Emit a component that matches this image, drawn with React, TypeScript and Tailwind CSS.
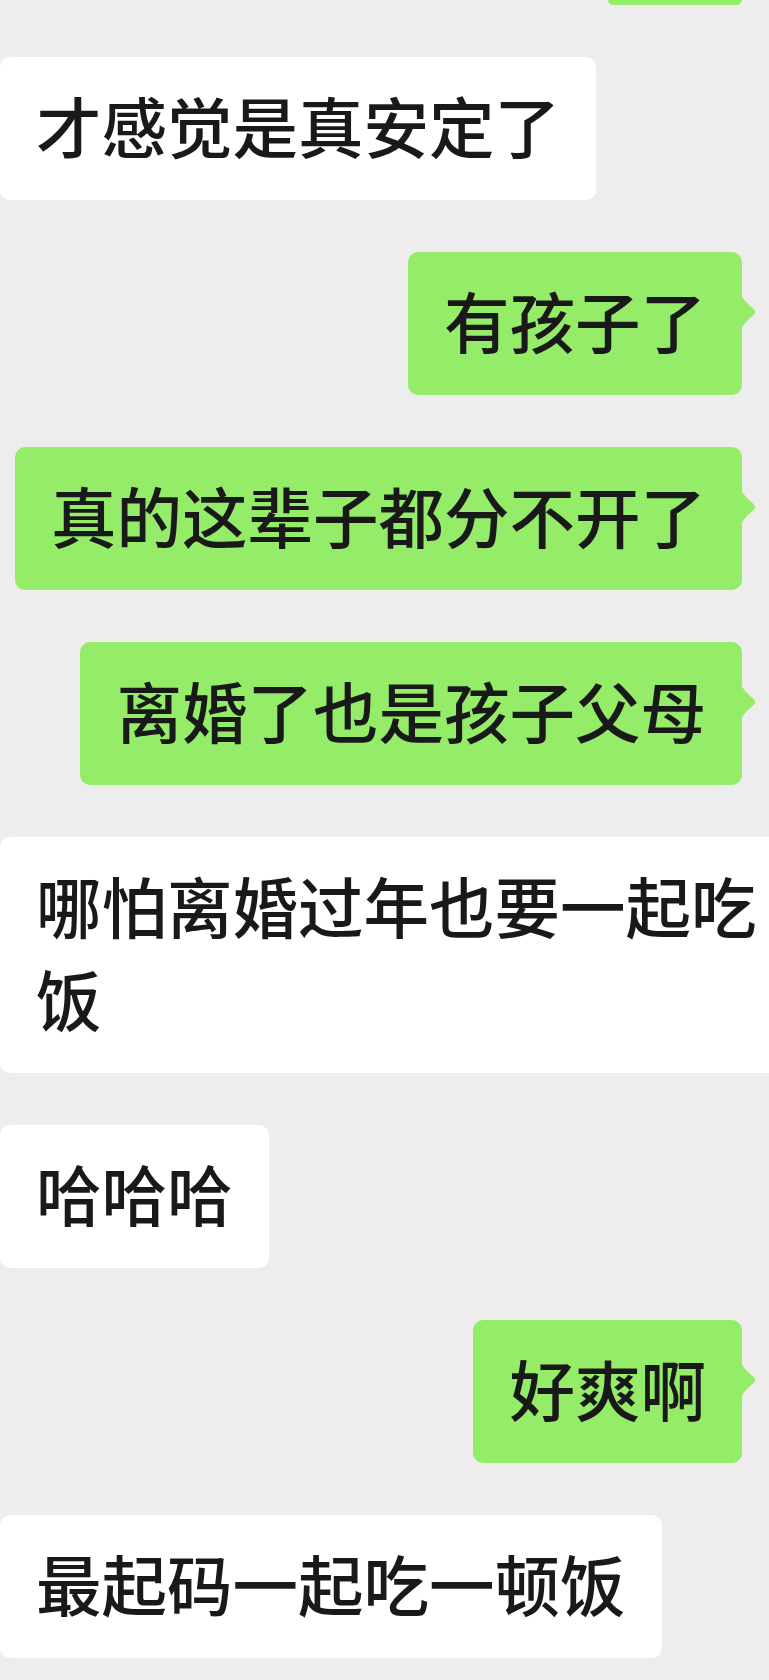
import React from "react";

function Tail() {
  return (
    <svg
      className="absolute left-[calc(100%-1px)] top-[42px] w-[16px] h-[36px]"
      viewBox="0 0 16 36"
      aria-hidden="true"
    >
      <path
        d="M0 0 C1.5 4 3.5 6.5 7 10 L13 15.5 Q15.5 18 13 20.5 L7 26 C3.5 29.5 1.5 32 0 36 Z"
        fill="#95ec69"
      />
    </svg>
  );
}

function Green({ children }: { children: React.ReactNode }) {
  return (
    <div className="self-end mr-[27px] relative bg-[#95ec69] rounded-[10px] px-[36px] pt-[21px] pb-[29px] whitespace-nowrap">
      {children}
      <Tail />
    </div>
  );
}

function White({ children, wide }: { children: React.ReactNode; wide?: boolean }) {
  return (
    <div
      className={
        wide
          ? "self-start shrink-0 w-[820px] bg-white rounded-[10px] px-[36px] pt-[21px] pb-[29px] whitespace-nowrap"
          : "self-start bg-white rounded-[10px] px-[36px] pt-[21px] pb-[29px] whitespace-nowrap"
      }
    >
      {children}
    </div>
  );
}

export default function App() {
  return (
    <div className="w-[769px] h-[1680px] overflow-hidden bg-[#ededed] flex flex-col gap-[52px] text-[65.5px] leading-[93px] font-medium text-[#191919] [font-family:'Noto_Sans_CJK_SC','Noto_Sans',sans-serif]">
      <div className="self-end mr-[27px] w-[134px] h-[5px] shrink-0 bg-[#95ec69] rounded-b-[8px]" />
      <White>才感觉是真安定了</White>
      <Green>有孩子了</Green>
      <Green>真的这辈子都分不开了</Green>
      <Green>离婚了也是孩子父母</Green>
      <White wide>
        哪怕离婚过年也要一起吃
        <br />
        饭
      </White>
      <White>哈哈哈</White>
      <Green>好爽啊</Green>
      <White>最起码一起吃一顿饭</White>
    </div>
  );
}
